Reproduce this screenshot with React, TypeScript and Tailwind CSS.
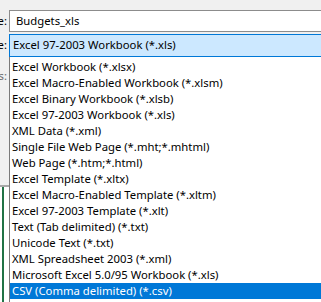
import React from "react";

const items = [
  "Excel Workbook (*.xlsx)",
  "Excel Macro-Enabled Workbook (*.xlsm)",
  "Excel Binary Workbook (*.xlsb)",
  "Excel 97-2003 Workbook (*.xls)",
  "XML Data (*.xml)",
  "Single File Web Page (*.mht;*.mhtml)",
  "Web Page (*.htm;*.html)",
  "Excel Template (*.xltx)",
  "Excel Macro-Enabled Template (*.xltm)",
  "Excel 97-2003 Template (*.xlt)",
  "Text (Tab delimited) (*.txt)",
  "Unicode Text (*.txt)",
  "XML Spreadsheet 2003 (*.xml)",
  "Microsoft Excel 5.0/95 Workbook (*.xls)",
  "CSV (Comma delimited) (*.csv)",
  "Formatted Text (Space delimited) (*.prn)",
];

export default function App() {
  return (
    <div
      className="w-[321px] h-[302px] overflow-hidden bg-[#f0f0f0] flex text-[11.3px] text-black"
      style={{ fontFamily: '"Noto Sans", "Open Sans", sans-serif' }}
    >
      {/* left label column */}
      <div className="w-[9px] shrink-0 flex flex-col overflow-hidden">
        <div className="h-[10px] shrink-0" />
        <div className="h-[22px] shrink-0 flex items-center justify-end pr-[2px] whitespace-nowrap">
          File name:
        </div>
        <div className="h-[2px] shrink-0" />
        <div className="h-[23px] shrink-0 flex items-center justify-end pr-[2px] whitespace-nowrap">
          Save as type:
        </div>
        <div className="h-[11px] shrink-0" />
        <div className="h-[16px] shrink-0 flex items-center justify-end pr-[2px] whitespace-nowrap text-[#6d6d6d]">
          Authors:
        </div>
        <div className="h-[101px] shrink-0" />
        <div className="h-[2px] shrink-0 bg-[#a8a8a8]" />
        <div className="flex-1 bg-white flex">
          <div className="w-[2px]" />
          <div className="w-[2px] bg-[#217346]" />
        </div>
      </div>

      {/* right column */}
      <div className="flex-1 flex flex-col min-w-0">
        <div className="h-[10px] shrink-0" />
        <div className="h-[22px] shrink-0 border border-r-0 border-[#8c8c8c] bg-white flex items-center pl-[6px] whitespace-nowrap">
          Budgets_xls
        </div>
        <div className="h-[2px] shrink-0" />
        <div className="h-[23px] shrink-0 border border-r-0 border-[#0078d7] bg-[#cce8ff] flex items-center pl-[3px] whitespace-nowrap">
          Excel 97-2003 Workbook (*.xls)
        </div>
        <div className="flex-1 bg-white border-l border-[#7a7a7a] pt-[2px] flex flex-col">
          {items.map((it, i) => (
            <div
              key={it}
              className={
                "h-[16px] shrink-0 flex items-center pl-[2px] whitespace-nowrap leading-[16px] " +
                (i === 14 ? "bg-[#0078d7] text-white" : "")
              }
            >
              {it}
            </div>
          ))}
        </div>
      </div>
    </div>
  );
}
